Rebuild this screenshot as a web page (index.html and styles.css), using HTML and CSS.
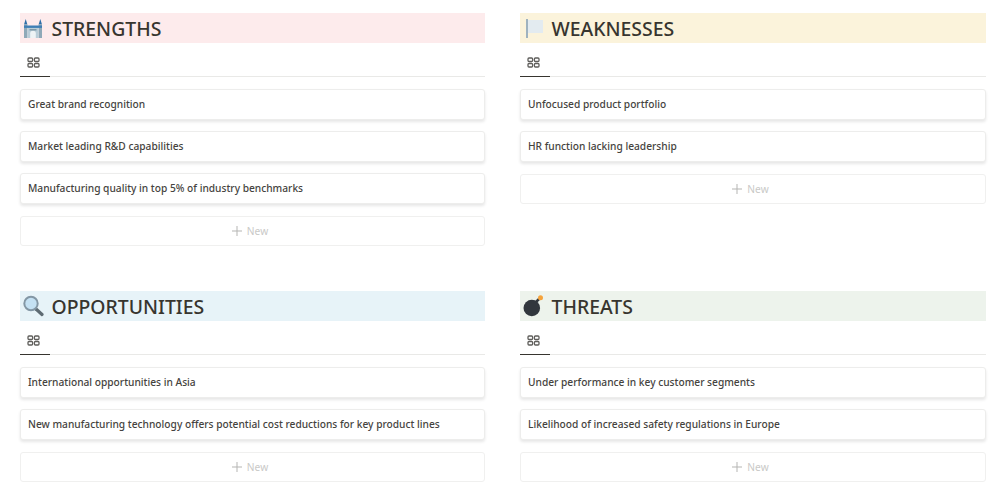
FILE: index.html
```html
<!DOCTYPE html>
<html lang="en">
<head>
<meta charset="utf-8">
<title>SWOT</title>
<link rel="stylesheet" href="styles.css">
</head>
<body>
<main class="grid">
  <section class="quad">
    <h2 class="head red">
      <svg class="ico" viewBox="0 0 22 22"><path d="M2 7.500 3.700 2 5.400 7.500zM16.600 7.500 18.300 2 20 7.500z" fill="#2f6fa8"/><rect x="2" y="7.500" width="3.400" height="13.500" fill="#8fa9b8"/><rect x="16.600" y="7.500" width="3.400" height="13.500" fill="#8fa9b8"/><rect x="5.400" y="9.500" width="11.200" height="11.500" fill="#b9cdd8"/><rect x="2" y="8.500" width="18" height="2.400" fill="#3f7fb5"/><path d="M8.200 21v-4.500a2.800 2.800 0 0 1 5.600 0V21z" fill="#eef3f5"/><rect x="7.500" y="12" width="7" height="1.500" fill="#7d97a6"/></svg>
      <span>STRENGTHS</span>
    </h2>
    <div class="tabs"><div class="tab"><svg class="gal" viewBox="0 0 13 11"><g fill="none" stroke="#5f5e5b" stroke-width="1.300"><rect x="1" y="1" width="4.600" height="3.500" rx="1"/><rect x="7.400" y="1" width="4.600" height="3.500" rx="1"/><rect x="1" y="6.500" width="4.600" height="3.500" rx="1"/><rect x="7.400" y="6.500" width="4.600" height="3.500" rx="1"/></g></svg></div></div>
    <div class="list">
      <div class="card">Great brand recognition</div>
      <div class="card">Market leading R&amp;D capabilities</div>
      <div class="card">Manufacturing quality in top 5% of industry benchmarks</div>
      <div class="new"><svg class="plus" viewBox="0 0 10 10"><path d="M5 0v10M0 5h10" stroke="#b5b5b3" stroke-width="1"/></svg><span>New</span></div>
    </div>
  </section>
  <section class="quad">
    <h2 class="head yellow">
      <svg class="ico" viewBox="0 0 22 22"><rect x="4" y="2" width="2" height="19" fill="#9fb2bf"/><path d="M6 3h15v13H6z" fill="#e3ebf0"/></svg>
      <span>WEAKNESSES</span>
    </h2>
    <div class="tabs"><div class="tab"><svg class="gal" viewBox="0 0 13 11"><g fill="none" stroke="#5f5e5b" stroke-width="1.300"><rect x="1" y="1" width="4.600" height="3.500" rx="1"/><rect x="7.400" y="1" width="4.600" height="3.500" rx="1"/><rect x="1" y="6.500" width="4.600" height="3.500" rx="1"/><rect x="7.400" y="6.500" width="4.600" height="3.500" rx="1"/></g></svg></div></div>
    <div class="list">
      <div class="card">Unfocused product portfolio</div>
      <div class="card">HR function lacking leadership</div>
      <div class="new"><svg class="plus" viewBox="0 0 10 10"><path d="M5 0v10M0 5h10" stroke="#b5b5b3" stroke-width="1"/></svg><span>New</span></div>
    </div>
  </section>
  <section class="quad">
    <h2 class="head blue">
      <svg class="ico" viewBox="0 0 22 22"><path d="M14 14 20 19.500" stroke="#5e6b73" stroke-width="3.200" stroke-linecap="round"/><circle cx="9" cy="8.500" r="6.700" fill="#c4e1f3" stroke="#8397a5" stroke-width="2"/></svg>
      <span>OPPORTUNITIES</span>
    </h2>
    <div class="tabs"><div class="tab"><svg class="gal" viewBox="0 0 13 11"><g fill="none" stroke="#5f5e5b" stroke-width="1.300"><rect x="1" y="1" width="4.600" height="3.500" rx="1"/><rect x="7.400" y="1" width="4.600" height="3.500" rx="1"/><rect x="1" y="6.500" width="4.600" height="3.500" rx="1"/><rect x="7.400" y="6.500" width="4.600" height="3.500" rx="1"/></g></svg></div></div>
    <div class="list">
      <div class="card">International opportunities in Asia</div>
      <div class="card">New manufacturing technology offers potential cost reductions for key product lines</div>
      <div class="new"><svg class="plus" viewBox="0 0 10 10"><path d="M5 0v10M0 5h10" stroke="#b5b5b3" stroke-width="1"/></svg><span>New</span></div>
    </div>
  </section>
  <section class="quad">
    <h2 class="head green">
      <svg class="ico" viewBox="0 0 22 22"><path d="M13 8 17 4" stroke="#31373d" stroke-width="2.500"/><circle cx="18.500" cy="2.800" r="2.500" fill="#f5a33c"/><circle cx="9.800" cy="13" r="8.300" fill="#31373d"/></svg>
      <span>THREATS</span>
    </h2>
    <div class="tabs"><div class="tab"><svg class="gal" viewBox="0 0 13 11"><g fill="none" stroke="#5f5e5b" stroke-width="1.300"><rect x="1" y="1" width="4.600" height="3.500" rx="1"/><rect x="7.400" y="1" width="4.600" height="3.500" rx="1"/><rect x="1" y="6.500" width="4.600" height="3.500" rx="1"/><rect x="7.400" y="6.500" width="4.600" height="3.500" rx="1"/></g></svg></div></div>
    <div class="list">
      <div class="card">Under performance in key customer segments</div>
      <div class="card">Likelihood of increased safety regulations in Europe</div>
      <div class="new"><svg class="plus" viewBox="0 0 10 10"><path d="M5 0v10M0 5h10" stroke="#b5b5b3" stroke-width="1"/></svg><span>New</span></div>
    </div>
  </section>
</main>
</body>
</html>
```
FILE: styles.css
```css
* { box-sizing: border-box; }
html, body { margin: 0; height: 100%; background: #fff; overflow: hidden; }
body { font-family: "Noto Sans", "Open Sans", sans-serif; color: #37352f; }
.grid {
  display: grid;
  grid-template-columns: 465px 466px;
  grid-template-rows: 278px 200px;
  column-gap: 35px;
  padding: 13px 0 0 20px;
}
.head {
  display: flex;
  align-items: center;
  height: 30px;
  margin: 0;
  padding-left: 2px;
  font-size: 19.400px;
  font-weight: 500;
  line-height: 33px;
}
.head span { margin-left: 7.500px; }
.ico { width: 22px; height: 22px; flex: none; }
.red { background: #fdebec; }
.yellow { background: #fbf3db; }
.blue { background: #e7f3f8; }
.green { background: #edf3ec; }
.tabs {
  height: 34px;
  border-bottom: 1px solid #e9e9e7;
}
.tab {
  width: 30px;
  height: 34px;
  border-bottom: 1px solid #37352f;
  padding: 14px 0 0 7px;
}
.gal { display: block; width: 13px; height: 11px; }
.list {
  display: flex;
  flex-direction: column;
  gap: 11px;
  padding-top: 12px;
}
.card {
  height: 31px;
  padding-left: 7px;
  font-size: 10.200px;
  font-weight: 500;
  line-height: 29px;
  color: #45433e;
  white-space: nowrap;
  border: 1px solid #ededec;
  border-radius: 3px;
  background: #fff;
  box-shadow: 0 2px 3px rgba(15,15,15,.1);
}
.new {
  display: flex;
  align-items: center;
  justify-content: center;
  gap: 5px;
  height: 30px;
  margin-top: 1px;
  padding-right: 5px;
  font-size: 10.200px;
  color: #c9c9c7;
  border: 1px solid #f0f0ef;
  border-radius: 3px;
}
.plus { width: 10px; height: 10px; flex: none; }
```
